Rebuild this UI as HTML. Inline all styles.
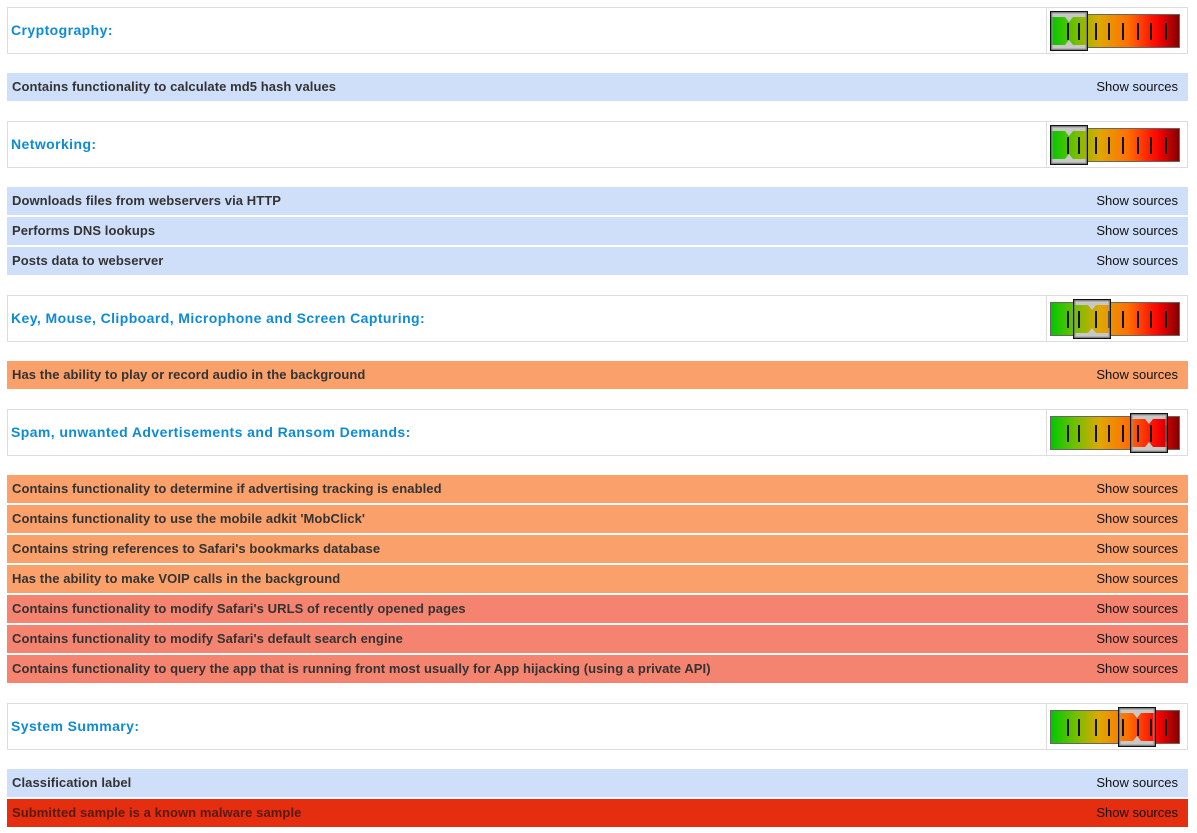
<!DOCTYPE html>
<html><head><style>
body{margin:0;background:#fff;font-family:"Liberation Sans",Arial,sans-serif;}
.h{position:absolute;left:7px;width:1179px;height:45px;border:1px solid #ddd;background:#fff;}
.h .t{position:absolute;left:3px;top:14px;font-size:14px;font-weight:bold;color:#0d8bd5;letter-spacing:0.42px;}
.h .d{position:absolute;left:1038px;top:0;width:1px;height:45px;background:#ddd;}
.g{position:absolute;left:1042px;top:6px;width:130px;height:34px;border:1px solid #666;box-sizing:border-box;
background:linear-gradient(to right,#00c800 0%,#6cc000 18%,#e0a800 38%,#ff7000 60%,#ff1000 80%,#e00000 88%,#800000 100%);}
.tk{position:absolute;top:8px;width:2px;height:17px;background:#111;}
.m{position:absolute;top:-4px;width:38px;height:40px;}
.r{position:absolute;left:7px;width:1181px;height:28px;font-size:13px;}
.r .a{position:absolute;left:5px;top:6px;font-weight:bold;color:#333;letter-spacing:0.08px;}
.r .b{position:absolute;right:10px;top:6px;color:#111;}
.bl{background:#cfdff9}.or{background:#f9a06b}.sa{background:#f48470}.rd{background:#e52d0f}
</style></head><body>

<div class="h" style="top:7px"><div class="t">Cryptography:</div><div class="d"></div><div class="g" id="g1"></div></div>
<div class="r bl" style="top:73px"><div class="a">Contains functionality to calculate md5 hash values</div><div class="b">Show sources</div></div>

<div class="h" style="top:121px"><div class="t">Networking:</div><div class="d"></div><div class="g" id="g2"></div></div>
<div class="r bl" style="top:187px"><div class="a">Downloads files from webservers via HTTP</div><div class="b">Show sources</div></div>
<div class="r bl" style="top:217px"><div class="a">Performs DNS lookups</div><div class="b">Show sources</div></div>
<div class="r bl" style="top:247px"><div class="a">Posts data to webserver</div><div class="b">Show sources</div></div>

<div class="h" style="top:295px"><div class="t">Key, Mouse, Clipboard, Microphone and Screen Capturing:</div><div class="d"></div><div class="g" id="g3"></div></div>
<div class="r or" style="top:361px"><div class="a">Has the ability to play or record audio in the background</div><div class="b">Show sources</div></div>

<div class="h" style="top:409px"><div class="t">Spam, unwanted Advertisements and Ransom Demands:</div><div class="d"></div><div class="g" id="g4"></div></div>
<div class="r or" style="top:475px"><div class="a">Contains functionality to determine if advertising tracking is enabled</div><div class="b">Show sources</div></div>
<div class="r or" style="top:505px"><div class="a">Contains functionality to use the mobile adkit 'MobClick'</div><div class="b">Show sources</div></div>
<div class="r or" style="top:535px"><div class="a">Contains string references to Safari's bookmarks database</div><div class="b">Show sources</div></div>
<div class="r or" style="top:565px"><div class="a">Has the ability to make VOIP calls in the background</div><div class="b">Show sources</div></div>
<div class="r sa" style="top:595px"><div class="a">Contains functionality to modify Safari's URLS of recently opened pages</div><div class="b">Show sources</div></div>
<div class="r sa" style="top:625px"><div class="a">Contains functionality to modify Safari's default search engine</div><div class="b">Show sources</div></div>
<div class="r sa" style="top:655px"><div class="a">Contains functionality to query the app that is running front most usually for App hijacking (using a private API)</div><div class="b">Show sources</div></div>

<div class="h" style="top:703px"><div class="t">System Summary:</div><div class="d"></div><div class="g" id="g5"></div></div>
<div class="r bl" style="top:769px"><div class="a">Classification label</div><div class="b">Show sources</div></div>
<div class="r rd" style="top:799px"><div class="a" style="color:#5a1a10">Submitted sample is a known malware sample</div><div class="b">Show sources</div></div>

<script>
var mk={g1:-1,g2:-1,g3:22,g4:79,g5:67};
for(var id in mk){var g=document.getElementById(id);var s='';
[16,27,44,57,71,86,99,114].forEach(function(x){s+='<div class="tk" style="left:'+x+'px"></div>';});
s+='<svg class="m" style="left:'+mk[id]+'px" viewBox="0 0 38 40"><polygon points="0,0 38,0 38,6 33,6 23,6 19,11 15,6 0,6" fill="#c8c8c8"/><polygon points="0,34 15,34 19,29 23,34 38,34 38,40 0,40" fill="#c8c8c8"/><rect x="0.5" y="0.5" width="37" height="39" fill="none" stroke="#111" stroke-width="1.5"/><rect x="2" y="2" width="34" height="36" fill="none" stroke="#999" stroke-width="1"/></svg>';
g.innerHTML=s;}
</script>
</body></html>
